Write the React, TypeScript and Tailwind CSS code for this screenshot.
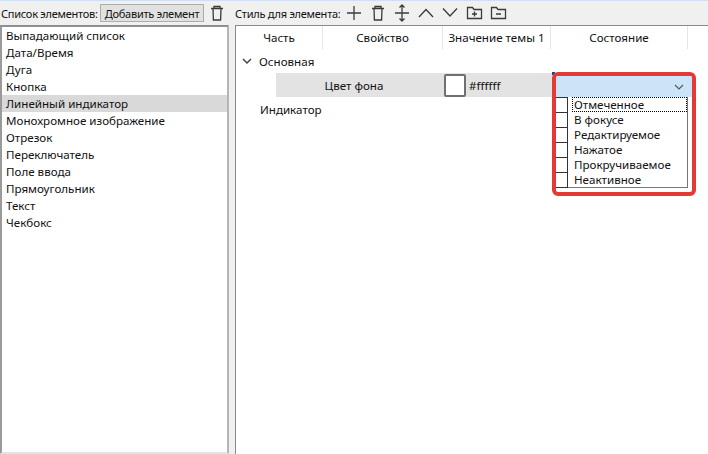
import React from "react";

const items = [
  "Выпадающий список",
  "Дата/Время",
  "Дуга",
  "Кнопка",
  "Линейный индикатор",
  "Монохромное изображение",
  "Отрезок",
  "Переключатель",
  "Поле ввода",
  "Прямоугольник",
  "Текст",
  "Чекбокс",
];

const states = ["Отмеченное", "В фокусе", "Редактируемое", "Нажатое", "Прокручиваемое", "Неактивное"];

const Ico = ({ children }: { children: React.ReactNode }) => (
  <svg width="18" height="18" viewBox="0 0 18 18" fill="none" stroke="#3a3a3a" strokeWidth="1.3">
    {children}
  </svg>
);

const Trash = () => (
  <Ico>
    <path d="M3 4.500h12M6 4.500V2.500h6v2M5 4.500l.4 11.500h7.200l.4-11.500" />
  </Ico>
);

const columns = [
  { label: "Часть", w: "w-[87px]" },
  { label: "Свойство", w: "w-[120px]" },
  { label: "Значение темы 1", w: "w-[108px]" },
  { label: "Состояние", w: "w-[137px]" },
];

export default function App() {
  return (
    <div className="w-[708px] h-[454px] overflow-hidden relative bg-[#f0f0f0] text-[11.6px] leading-[17px] text-[#111] font-['Noto_Sans',sans-serif] flex flex-col border-t border-[#cfe0f2]">
      <div className="h-[24px] flex items-center shrink-0 pl-[1px] text-[11px] tracking-[-0.25px] whitespace-nowrap">
        <span className="w-[99px]">Список элементов:</span>
        <button className="h-[18px] w-[104px] border border-[#adadad] bg-[#e1e1e1] flex items-center justify-center">
          Добавить элемент
        </button>
        <span className="ml-[4px] flex"><Trash /></span>
        <span className="ml-[9px] w-[110px]">Стиль для элемента:</span>
        <span className="flex items-center gap-[6px]">
          <Ico>
            <path d="M9 2v14M2 9h14" />
          </Ico>
          <Trash />
          <Ico>
            <path d="M9 1v16M2 9h14M6.500 3.500L9 1l2.500 2.500M6.500 14.500L9 17l2.500-2.500" />
          </Ico>
          <Ico>
            <path d="M2 13l7-7.500 7 7.500" />
          </Ico>
          <Ico>
            <path d="M2 4.500l7 7.500 7-7.500" />
          </Ico>
          <Ico>
            <path d="M2.500 14.500V3.500h5l1.500 2h7.500v9zM9.500 7.500v5M7 10h5" />
          </Ico>
          <Ico>
            <path d="M2.500 14.500V3.500h5l1.500 2h7.500v9zM7 10h5" />
          </Ico>
        </span>
      </div>
      <div className="flex-1 flex gap-[6px] min-h-0">
        <div className="w-[229px] bg-white border-2 border-[#9a9a9a] border-t-[#8f8f8f] border-b-[#e3e3e3] border-r-[#b5b5b5]">
          {items.map((item, i) => (
            <div key={item} className={`h-[17px] pl-[4px] leading-[17px] ${i === 4 ? "bg-[#d9d9d9]" : ""}`}>
              {item}
            </div>
          ))}
        </div>
        <div className="flex-1 bg-white border-l border-t border-[#8a8a8a]">
          <div className="h-[23px] flex">
            {columns.map((c) => (
              <div key={c.label} className={`${c.w} border-r border-[#e5e5e5] flex items-center justify-center`}>
                {c.label}
              </div>
            ))}
          </div>
          <div className="flex items-center h-[24px] pl-[6px]">
            <svg width="10" height="10" viewBox="0 0 10 10" fill="none" stroke="#444" strokeWidth="1.500">
              <path d="M1 3l4 4 4-4" />
            </svg>
            <span className="ml-[7px]">Основная</span>
          </div>
          <div className="ml-[40px] w-[276px] h-[24px] bg-[#e3e3e3] flex items-center">
            <span className="w-[168px] text-center pr-[12px]">Цвет фона</span>
            <span className="w-[22px] h-[23px] bg-white border-2 border-[#707070] rounded-[2px]" />
            <span className="ml-[3px]">#ffffff</span>
          </div>
          <div className="h-[25px] flex items-center pl-[24px]">Индикатор</div>
        </div>
      </div>
      <div className="absolute left-[552px] top-[71px] w-[3px] h-[3px] bg-[#0a4f8a]" />
      {/* combo with its open list, highlighted in red */}
      <div className="absolute left-[552px] top-[71px] w-[144px] h-[124px] border-[4px] border-[#e53935] rounded-[6px] bg-white overflow-hidden">
        <div className="h-[21px] bg-[#cce4f7] flex items-center justify-end pr-[8px]">
          <svg width="10" height="8" viewBox="0 0 10 8" fill="none" stroke="#555" strokeWidth="1.100">
            <path d="M1 2l4 4 4-4" />
          </svg>
        </div>
        <div className="border-r border-b border-[#777] h-[91px] w-[132px]">
          {states.map((s, i) => (
            <div key={s} className="h-[15px] flex items-start">
              <span className="w-[13px] h-[16px] -ml-[1px] border border-[#333] bg-white shrink-0" />
              <span className={`ml-[4px] flex-1 h-[15px] pl-[2px] leading-[15px] ${i === 0 ? "outline-1 -outline-offset-1 outline-dotted outline-black" : ""}`}>{s}</span>
            </div>
          ))}
        </div>
      </div>
    </div>
  );
}
